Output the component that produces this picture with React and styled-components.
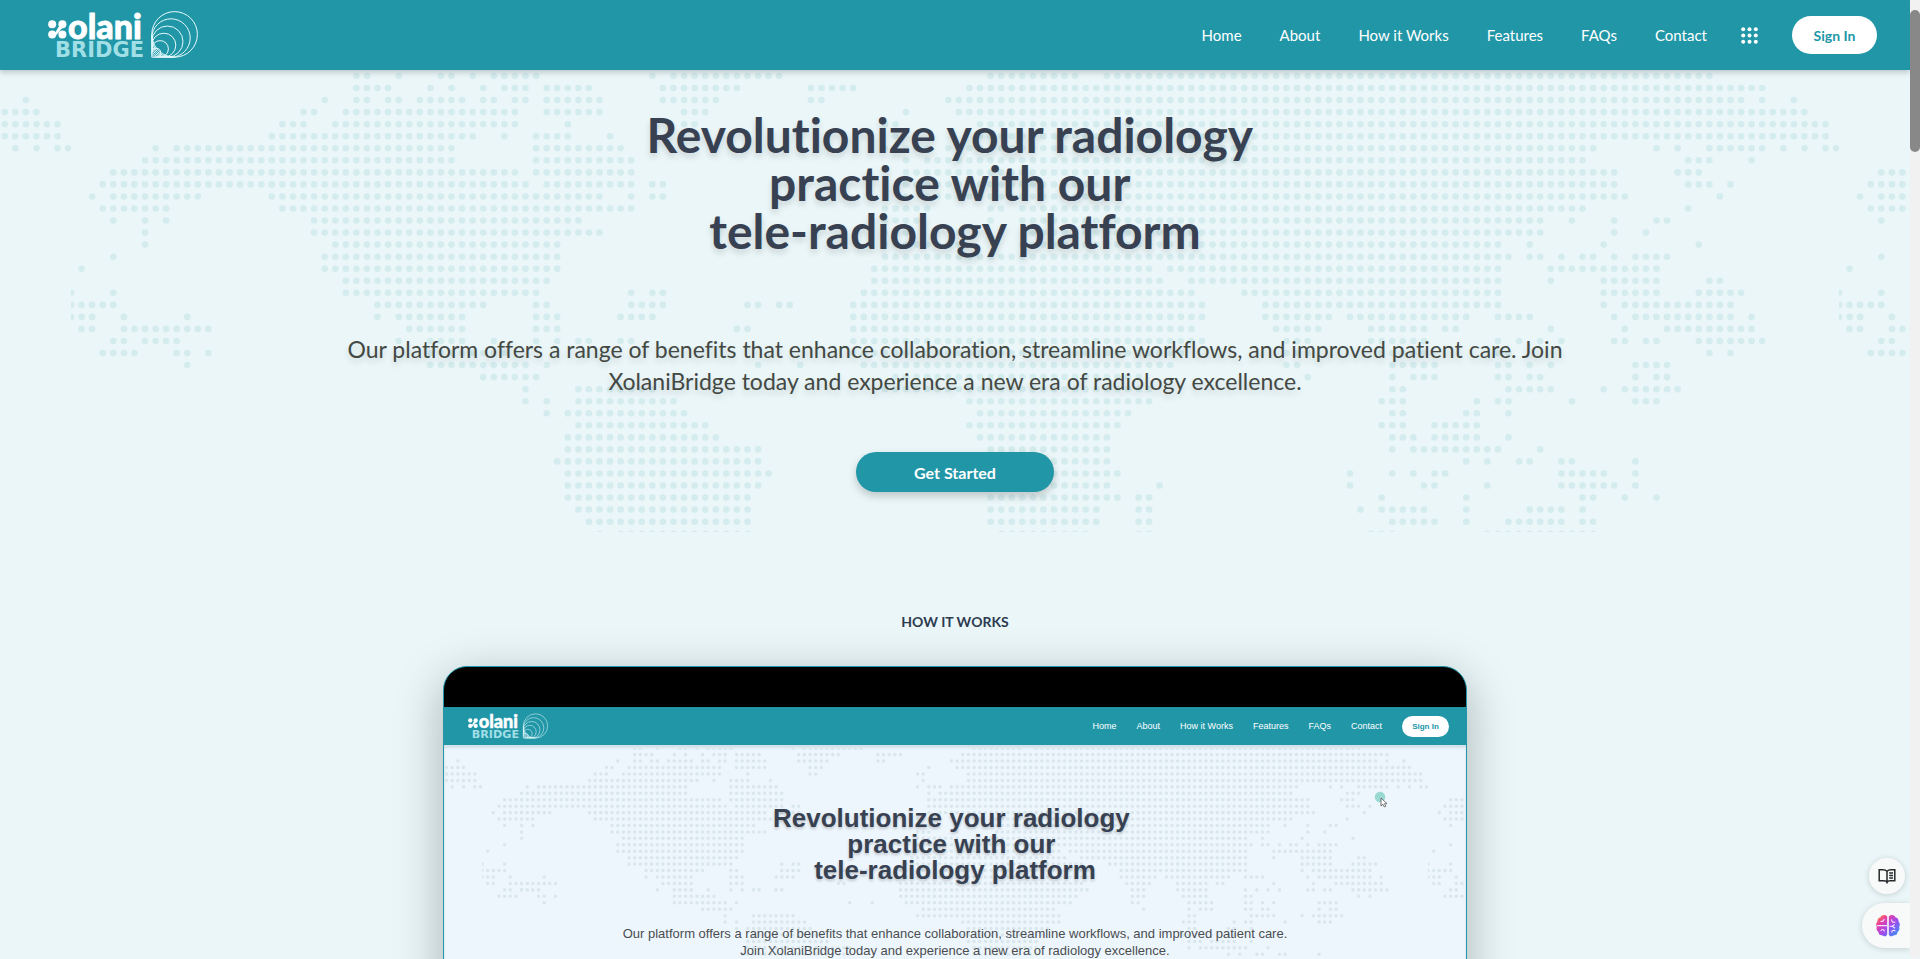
import React from "react";
import styled, { createGlobalStyle } from "styled-components";

const TEAL = "#2196a7";

const GlobalStyle = createGlobalStyle`
  *, *::before, *::after { box-sizing: border-box; }
  body {
    margin: 0;
    background: #eaf6f8;
    color: #374151;
    font-family: Lato, "Liberation Sans", sans-serif;
    font-variant-ligatures: none;
  }
  h1, h2, p, ul { margin: 0; padding: 0; }
  button { font-family: inherit; cursor: pointer; }
  a { color: inherit; text-decoration: none; }
`;

/* Dotted world map: one entry per dot row, each a list of column runs. */
const MAP_ROWS = [
  "27-28 31 35-36 38 40-44 55 57-67 87-95 98-155",
  "27-30 34 36 39 41-43 45-49 56-63 70-74 85-160",
  "24 27-28 30-31 33-37 39-40 42-43 45-50 56-61 70-71 83-158 160 163",
  "22-23 26-42 45-50 58-60 79 84-164",
  "20-22 25-42 47 58-59 77-78 86-166",
  "19-38 41 44-47 51 78 86-166",
  "8 10-36 44-52 77 79-81 83-144 150 152 155-160 162 164 166-167",
  "7-36 44-53 79 81-143 153-155 159",
  "4-42 44-53 79-146 152-154",
  "3-43 45-53 55-56 79-146 153-155 157",
  "2 4-12 19-50 53 55-56 79 81-147 156",
  "3-9 20-53 77-81 87-88 90-143 153",
  "4 7 9 23-48 77-80 87 90-139 142 146 150-151",
  "7 23-50 77-79 84 91-139 146 149",
  "7 25-46 77-84 90-135 138 145 154",
  "4 24-46 77-136 138-139 141 143-144 146 148-151",
  "1 24-46 76-102 104-135 140-150",
  "26-45 76-103 106-135 140 145-150 155-156",
  "0 4 26-44 53 55-56 75-106 111-135 145-150 154-158",
  "0-4 29-39 44-45 53-56 64-65 67-68 74-107 113-135 145 147-157",
  "0-2 5 11 29 31-37 44-46 52-55 74-107 113-119 121-132 135-138 146 148-157 159",
  "1-2 5-13 32-37 44-46 63-64 74-106 114-118 123-128 130-131 140 147 151-159",
  "4-5 7-10 31 34-37 40 44 46 48-49 52-53 74-107 115-117 123-128 135 137 139 141 146-147 149-150 154-160",
  "3-6 10-11 13 34-41 74-105 115-117 124-128 135-136 155 157",
  "11 34-43 45 65 69 75-104 115-116 125-129 135-136 138 140 148-151",
  "39-44 78-101 117 125 127-129 135-136 138-139 148 150-151",
  "43 48-55 77-102 125-126 136-140 145 147-152",
  "43 45 48-57 85-102 124-126 133 135-136 142 148-150",
  "45 47-58 86-100 125-126 132-133 136",
  "48-60 85-99 124-126 129-133",
  "47-61 86-98 125-127 129-133 136",
  "47-65 87-98 125 127-135 139",
  "46-65 87-98 132 134 137-138 141-142 148",
  "47-66 87-99 121 125 127 129-130 141-145 148",
  "47-65 87-98 103 121 128-129 134 141-146 148",
  "47-64 87-99 101-102 124 132 143-144 147 150",
  "48-64 87-97 101-102 122 124-128 132 138-141 143",
  "49-64 87-97 101-102 125-129 132 136-141 143-144",
  "50 52-64 88-96 101-102 123-125 134-144",
];

const COL_STEP = 10.57;
const ROW_STEP = 12.045;

const MAP_PATH = MAP_ROWS.map((row, r) =>
  row
    .split(" ")
    .map((run) => {
      const [from, to = from] = run.split("-").map(Number);
      let d = "";
      for (let c = from; c <= to; c += 1) {
        d += `M${(c * COL_STEP).toFixed(1)} ${(6 + r * ROW_STEP).toFixed(1)}h0`;
      }
      return d;
    })
    .join("")
).join("");

const MapLayer = styled.div`
  position: absolute;
  inset: 0;
  display: flex;
  justify-content: center;
  overflow: hidden;
`;

const MapTile = styled.svg`
  flex: none;
  width: ${(p) => p.$width}px;
  height: ${(p) => p.$height}px;
`;

function WorldMap({ width, height, color }) {
  return (
    <MapLayer aria-hidden="true">
      {[0, 1, 2].map((n) => (
        <MapTile key={n} $width={width} $height={height} viewBox="0 0 1768 462" preserveAspectRatio="none">
          <path d={MAP_PATH} stroke={color} strokeWidth="6.6" strokeLinecap="round" fill="none" />
        </MapTile>
      ))}
    </MapLayer>
  );
}

const LogoSvg = styled.svg`
  display: block;
  width: ${(p) => p.$width}px;
  height: auto;
  overflow: visible;
`;

function Logo({ width }) {
  return (
    <LogoSvg $width={width} viewBox="0 0 150 46" role="img" aria-label="Xolani Bridge">
      <g fill="#fff">
        <circle cx="4.2" cy="12.2" r="4" />
        <circle cx="14.4" cy="12.2" r="4" />
        <circle cx="4.2" cy="22.4" r="4" />
        <circle cx="14.4" cy="22.4" r="4" />
        <path d="M4 22.4C10 21 8 14 14.4 12.2L17 15C11 17 12 21 6 25Z" />
        <text x="20" y="26.5" fontFamily="Lato, sans-serif" fontWeight="900" fontSize="34" stroke="#fff" strokeWidth="0.8" strokeLinejoin="round">
          olani
        </text>
      </g>
      <text x="7" y="45.4" fontFamily="'DejaVu Sans', sans-serif" fontWeight="700" fontSize="21" fill="#a0dfe6">
        BRIDGE
      </text>
      <g fill="none" stroke="#e6fbfd" strokeWidth="1">
        <path d="M103.8 22.7V45.2H126.6" />
        {[22.8, 19.2, 15.6, 12, 8.3, 4.5].map((r) => (
          <circle key={r} cx={103.8 + r} cy={45.2 - r} r={r} />
        ))}
      </g>
    </LogoSvg>
  );
}

const Page = styled.div`
  position: relative;
  height: 100vh;
  overflow: hidden;
  padding-right: 10px;
`;

const Header = styled.header`
  position: relative;
  z-index: 2;
  display: flex;
  align-items: center;
  justify-content: space-between;
  height: 70px;
  padding: 0 33px 0 48px;
  background: ${TEAL};
  color: #fff;
  box-shadow: 0 2px 6px rgba(0, 0, 0, 0.22);
`;

const HeaderRight = styled.div`
  display: flex;
  align-items: center;
  gap: 34px;
`;

const Nav = styled.nav`
  display: flex;
  gap: 38px;
  font-size: 15px;
  line-height: 24px;
`;

const AppsButton = styled.button`
  display: flex;
  padding: 0;
  border: 0;
  background: none;
`;

const SignIn = styled.button`
  width: 85px;
  height: 38px;
  padding: 0;
  border: 0;
  border-radius: 19px;
  background: #fff;
  color: ${TEAL};
  font-size: 14px;
  font-weight: 700;
`;

const Hero = styled.section`
  position: relative;
  display: flex;
  flex-direction: column;
  align-items: center;
  padding: 41px 16px 40px;
  text-align: center;
`;

const HeroTitle = styled.h1`
  position: relative;
  font-size: 48px;
  line-height: 48px;
  font-weight: 700;
  color: #374151;
  text-shadow: 0 4px 6px rgba(0, 0, 0, 0.14);
`;

const HeroText = styled.p`
  position: relative;
  max-width: 1280px;
  margin-top: 78px;
  font-size: 23px;
  line-height: 32px;
  color: #434843;
  text-shadow: 0 4px 6px rgba(0, 0, 0, 0.14);
`;

const GetStarted = styled.button`
  position: relative;
  width: 198px;
  height: 40px;
  margin-top: 55px;
  padding: 0;
  border: 0;
  border-radius: 20px;
  background: ${TEAL};
  color: #fff;
  font-size: 16px;
  font-weight: 700;
  box-shadow: 0 4px 8px rgba(0, 0, 0, 0.2);
`;

const HowItWorks = styled.section`
  display: flex;
  flex-direction: column;
  align-items: center;
  padding: 80px 16px;
`;

const SectionTitle = styled.h2`
  font-size: 14px;
  line-height: 20px;
  font-weight: 700;
  color: #2d3b50;
`;

const VideoFrame = styled.div`
  width: 100%;
  max-width: 1024px;
  margin-top: 34px;
  padding-top: 40px;
  border: 1px solid ${TEAL};
  border-radius: 24px;
  overflow: hidden;
  background: #000;
  box-shadow: 0 12px 48px rgba(0, 0, 0, 0.28);
  font-family: "Liberation Sans", Arial, sans-serif;
`;

const ClipHeader = styled.div`
  display: flex;
  align-items: center;
  justify-content: space-between;
  height: 38px;
  padding: 0 17px 0 24px;
  background: ${TEAL};
  color: #fff;
`;

const ClipNav = styled.nav`
  display: flex;
  align-items: center;
  gap: 20px;
  font-size: 9px;
  line-height: 12px;
`;

const ClipSignIn = styled.button`
  width: 47px;
  height: 21px;
  padding: 0;
  border: 0;
  border-radius: 11px;
  background: #fff;
  color: ${TEAL};
  font-size: 8px;
  font-weight: 700;
`;

const ClipBody = styled.div`
  position: relative;
  display: flex;
  flex-direction: column;
  align-items: center;
  min-height: 460px;
  padding-top: 60px;
  background: #eef6fd;
  text-align: center;
  box-shadow: inset 0 3px 3px rgba(60, 110, 130, 0.16);
`;

const ClipTitle = styled.h2`
  position: relative;
  font-size: 26px;
  line-height: 26px;
  font-weight: 700;
  color: #374151;
  text-shadow: 0 2px 3px rgba(0, 0, 0, 0.2);
`;

const ClipText = styled.p`
  position: relative;
  margin-top: 42px;
  font-size: 13px;
  line-height: 17px;
  color: #4a4d50;
`;

const Pointer = styled.svg`
  position: absolute;
  top: 46px;
  right: 74px;
  width: 18px;
  height: 20px;
`;

const FloatingTools = styled.aside`
  position: fixed;
  right: 10px;
  bottom: 11px;
  z-index: 3;
  display: flex;
  flex-direction: column;
  align-items: flex-end;
  gap: 9px;
`;

const ReadButton = styled.button`
  display: grid;
  place-items: center;
  width: 36px;
  height: 36px;
  margin-right: 5px;
  padding: 0;
  border: 0;
  border-radius: 50%;
  background: #f8fafa;
  box-shadow: 0 1px 6px rgba(0, 0, 0, 0.16);
`;

const BrainButton = styled.button`
  display: flex;
  align-items: center;
  width: 48px;
  height: 45px;
  padding: 0 0 0 14px;
  border: 0;
  border-radius: 23px 0 0 23px;
  background: #f8fafa;
  box-shadow: 0 1px 6px rgba(0, 0, 0, 0.16);
`;

const ScrollTrack = styled.div`
  position: fixed;
  top: 0;
  right: 0;
  bottom: 0;
  z-index: 4;
  width: 10px;
  padding-top: 10px;
  border-radius: 0 0 5px 5px;
  background: #f1f1f1;
`;

const ScrollThumb = styled.div`
  height: 142px;
  border-radius: 5px;
  background: #888;
`;

const LINKS = ["Home", "About", "How it Works", "Features", "FAQs", "Contact"];

function AppsIcon() {
  return (
    <svg width="17" height="17" viewBox="0 0 17 17" fill="#fff" aria-hidden="true">
      {[2.2, 8.5, 14.8].map((y) =>
        [2.2, 8.5, 14.8].map((x) => <circle key={`${x}-${y}`} cx={x} cy={y} r="2" />)
      )}
    </svg>
  );
}

function BookIcon() {
  return (
    <svg width="18" height="17" viewBox="0 0 18 17" fill="none" stroke="#26292b" strokeWidth="1.5" aria-hidden="true">
      <path d="M9 3.2C8 2.1 6.5 1.8 4.8 1.8H1.2V12.8H6C7.5 12.8 8.4 13.2 9 14.2C9.6 13.2 10.5 12.8 12 12.8H16.8V1.8H13.2C11.5 1.8 10 2.1 9 3.2ZM9 3.2V15.6" />
      <path d="M11.2 5H15M11.2 7.5H15M11.2 10H15" strokeWidth="1.3" />
    </svg>
  );
}

function BrainIcon() {
  return (
    <svg width="24" height="23" viewBox="0 0 24 23" aria-hidden="true">
      <defs>
        <linearGradient id="brain" x1="0" y1="0" x2="1" y2="1">
          <stop offset="0" stopColor="#ff8a1f" />
          <stop offset="0.28" stopColor="#e83ea8" />
          <stop offset="0.58" stopColor="#9a4df0" />
          <stop offset="1" stopColor="#26a3f5" />
        </linearGradient>
      </defs>
      <path
        fill="url(#brain)"
        d="M11.2 2.6V20.4C10.6 22.4 7.6 23 6 21.2C3.8 21.4 2.4 19.8 2.5 18C.8 17 0 14.8.9 13C-.2 11.4 0 9 1.4 7.8C1.2 5.4 2.6 3.6 4.6 3.3C5.4.4 10 .1 11.2 2.6ZM12.8 2.6V20.4C13.4 22.4 16.4 23 18 21.2C20.2 21.4 21.6 19.8 21.5 18C23.2 17 24 14.8 23.1 13C24.2 11.4 24 9 22.6 7.8C22.8 5.4 21.4 3.6 19.4 3.3C18.6.4 14 .1 12.8 2.6Z"
      />
      <g fill="none" stroke="#f6e9ff" strokeWidth="1.1" strokeLinecap="round">
        <path d="M1.5 11.6H11M5 7.4C6.6 7.6 7.8 6.8 8 5.2M5 16.6C5.6 15 7.6 15 8.4 17" />
        <path d="M15.6 5.8C15.8 8 17 8.6 19 8M14 12.2H16.4L18.4 10.6M16.4 12.2L18.6 14M15.6 18C16 16.4 17.4 16 19 16.8" />
      </g>
    </svg>
  );
}

function Links() {
  return LINKS.map((label) => (
    <a key={label} href="#top">
      {label}
    </a>
  ));
}

function TitleLines() {
  return (
    <>
      Revolutionize your radiology&nbsp;
      <br />
      practice with our&nbsp;
      <br />
      tele-radiology platform
    </>
  );
}

export default function App() {
  return (
    <Page id="top">
      <GlobalStyle />
      <Header>
        <a href="#top">
          <Logo width={150} />
        </a>
        <HeaderRight>
          <Nav>
            <Links />
          </Nav>
          <AppsButton type="button" aria-label="Apps">
            <AppsIcon />
          </AppsButton>
          <SignIn type="button">Sign In</SignIn>
        </HeaderRight>
      </Header>

      <main>
        <Hero>
          <WorldMap width={1768} height={462} color="#d5ecef" />
          <HeroTitle>
            <TitleLines />
          </HeroTitle>
          <HeroText>
            Our platform offers a range of benefits that enhance collaboration, streamline workflows, and improved
            patient care. Join
            <br />
            XolaniBridge today and experience a new era of radiology excellence.
          </HeroText>
          <GetStarted type="button">Get Started</GetStarted>
        </Hero>

        <HowItWorks>
          <SectionTitle>HOW IT WORKS</SectionTitle>
          <VideoFrame>
            <ClipHeader>
              <Logo width={80} />
              <ClipNav>
                <Links />
                <ClipSignIn type="button">Sign In</ClipSignIn>
              </ClipNav>
            </ClipHeader>
            <ClipBody>
              <WorldMap width={946} height={247} color="#d9e7ed" />
              <ClipTitle>
                <TitleLines />
              </ClipTitle>
              <ClipText>
                Our platform offers a range of benefits that enhance collaboration, streamline workflows, and improved
                patient care.
                <br />
                Join XolaniBridge today and experience a new era of radiology excellence.
              </ClipText>
              <Pointer viewBox="0 0 18 20" aria-hidden="true">
                <circle cx="6" cy="6" r="5.3" fill="#9ad8d4" />
                <path d="M7 7V15L9 13.3L10.4 16L11.8 15.3L10.5 12.7H13Z" fill="#fff" stroke="#555" strokeWidth="0.8" />
              </Pointer>
            </ClipBody>
          </VideoFrame>
        </HowItWorks>
      </main>

      <FloatingTools>
        <ReadButton type="button" aria-label="Reading mode">
          <BookIcon />
        </ReadButton>
        <BrainButton type="button" aria-label="Assistant">
          <BrainIcon />
        </BrainButton>
      </FloatingTools>

      <ScrollTrack aria-hidden="true">
        <ScrollThumb />
      </ScrollTrack>
    </Page>
  );
}
